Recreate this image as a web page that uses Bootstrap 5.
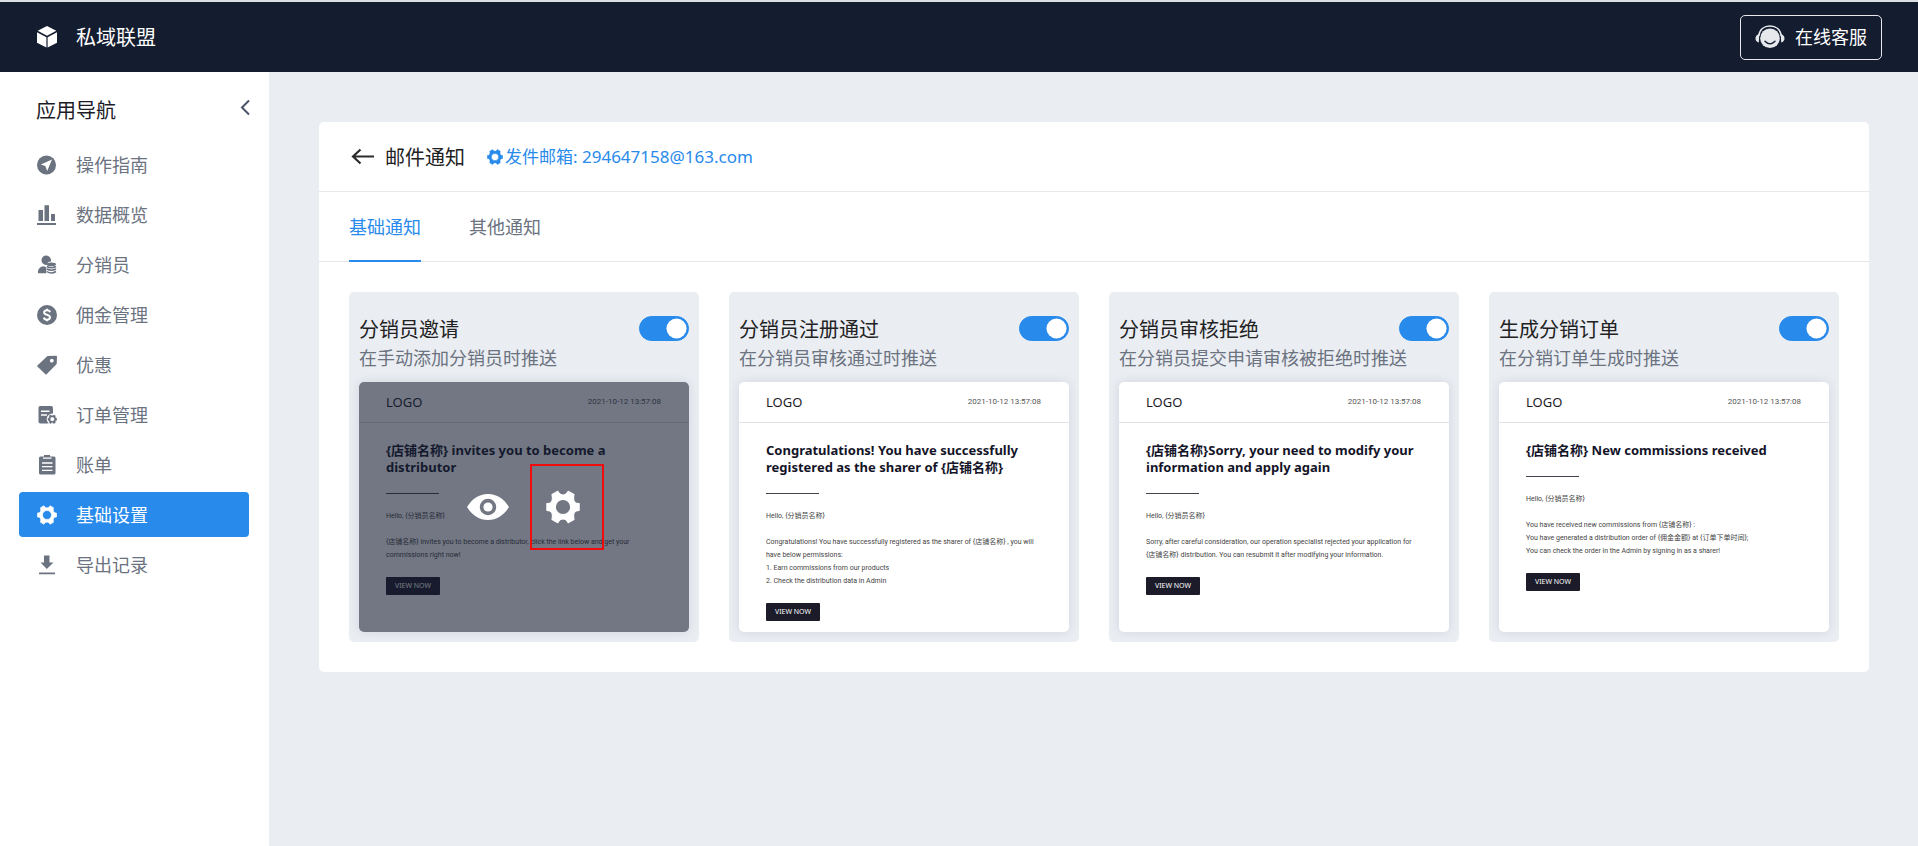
<!DOCTYPE html>
<html lang="zh-CN">
<head>
<meta charset="utf-8">
<meta name="viewport" content="width=device-width, initial-scale=1">
<title>邮件通知 - 私域联盟</title>
<link href="https://cdn.jsdelivr.net/npm/bootstrap@5.3.0/dist/css/bootstrap.min.css" rel="stylesheet">
<style>
:root { --navy: #141c30; --accent: #288aeb; --canvas: #eaedf2; --slate: #6b7280; }
body { font-family: "Noto Sans", "Noto Sans CJK SC", sans-serif; font-size: 18px; line-height: 26px; background: var(--canvas); color: #222; }
a { text-decoration: none; }
.icon { display: block; flex: none; fill: currentColor; }
.topbar { background: var(--navy); height: 72px; border-top: 2px solid #dcdfe4; padding: 0 36px 0 37px; }
.brand-link { gap: 19px; }
.brand-name, .page-title, .side-title { font-size: 20px; line-height: 30px; font-weight: 400; margin: 0; padding-top: 2px; }
.service-btn { height: 45px; padding: 0 14px; gap: 10px; border: 1px solid #e6e8eb; border-radius: 5px; color: #fff; background: none; font-size: 18px; }
.workspace { min-height: calc(100vh - 72px); }
.sidebar { width: 269px; flex: none; background: #fff; padding: 22px 19px 20px 19px; }
.side-head { height: 48px; padding: 0 0 0 17px; }
.side-title { color: #1c1c28; }
.side-nav { gap: 5px; margin-right: 1px; }
.side-nav .nav-link { height: 45px; padding: 0 18px; gap: 19px; border-radius: 4px; color: var(--slate); }
.side-nav .nav-link.active { background: var(--accent); color: #fff; }
.plain-btn { border: 0; background: none; padding: 0; color: inherit; }
.main-area { padding: 50px 49px 50px 50px; min-width: 0; }
.panel { background: #fff; border-radius: 5px; }
.panel-head { height: 70px; padding: 0 30px; border-bottom: 1px solid #e8eaed; }
.back-link { color: #2c2c2c; padding-left: 2px; margin-right: 10px; }
.sender { color: var(--accent); font-size: 17px; gap: 2px; margin-left: 22px; }
.tabs { height: 70px; padding: 0 30px; gap: 48px; border-bottom: 1px solid #e4e7ea; }
.tabs button { color: var(--slate); height: 70px; padding-top: 2px; border-bottom: 2px solid transparent; }
.tabs button.active { color: var(--accent); border-color: var(--accent); }
.panel-body { padding: 30px; }
.notice-grid { --bs-gutter-x: 30px; --bs-gutter-y: 30px; }
.notice { background: var(--canvas); border-radius: 5px; padding: 24px 10px 10px; }
.notice-title { font-size: 20px; line-height: 28px; }
.notice-desc { color: var(--slate); margin: 0 0 10px; line-height: 28px; white-space: nowrap; }
.form-switch .form-check-input.toggle { width: 50px; height: 25px; margin: 0; box-shadow: none; }
.toggle:checked { background-color: var(--accent); border-color: var(--accent);
  background-image: url("data:image/svg+xml,%3csvg xmlns='http://www.w3.org/2000/svg' viewBox='-4 -4 8 8'%3e%3ccircle r='3.5' fill='%23fff'/%3e%3c/svg%3e") !important; }
.preview { position: relative; height: 250px; background: #fff; border-radius: 5px; box-shadow: 0 0 12px rgba(20,28,48,.1); overflow: hidden; }
.mail-top { height: 41px; padding: 0 28px 0 27px; border-bottom: 1px solid #dfe1e4; }
.mail-logo { font-size: 13px; line-height: 18px; color: #1c1c28; }
.mail-date { font-family: Roboto, sans-serif; font-size: 8px; color: #555; }
.mail-body { padding: 19px 22px 0 27px; font-family: Roboto, "Noto Sans CJK SC", sans-serif; font-size: 7px; line-height: 13px; color: #444; }
.mail-body p { margin: 0 0 13px; white-space: nowrap; }
.mail-title { font-family: "Noto Sans", "Noto Sans CJK SC", sans-serif; font-size: 13px; line-height: 17px; font-weight: 700; color: #141428; margin: 0; white-space: nowrap; }
.mail-rule { width: 53px; height: 1px; background: #44444f; margin: 17px 0 16px; }
.mail-btn { background: #1c1b29; color: #fff; border: 0; border-radius: 1px; width: 54px; height: 18px; padding: 0; font-family: "Noto Sans", sans-serif; font-size: 7px; line-height: 18px; margin-top: 15px; display: block; }
.preview-tools { position: absolute; inset: 0; padding: 0 2px 1px 0; background: rgba(20,28,48,.6); color: #fff; gap: 37px; }
.focus-frame { position: absolute; inset: -26px -24px -26px -16px; border: 2px solid #f00c0c; }
</style>
</head>
<body>
<svg width="0" height="0" class="position-absolute" aria-hidden="true">
  <symbol id="gear" viewBox="-12.2 -12.2 24.4 24.4"><path fill-rule="evenodd" stroke="currentColor" stroke-width=".8" stroke-linejoin="round" d="M11.6-2.4 11.6 2.4Q9.200 2.300 8.200 3.800 7.200 5.400 7.900 8.900L3.700 11.300Q2.400 8.600 0 8.600-2.400 8.600-3.700 11.300L-7.900 8.900Q-7.200 5.400-8.200 3.800-9.200 2.300-11.600 2.400L-11.600-2.400Q-9.200-2.300-8.200-3.800-7.200-5.400-7.900-8.900L-3.700-11.300Q-2.400-8.600 0-8.600 2.400-8.600 3.700-11.300L7.900-8.900Q7.200-5.400 8.200-3.800 9.200-2.300 11.600-2.400ZM0-5.500A5.500 5.500 0 1 0 0 5.500 5.500 5.500 0 1 0 0-5.500Z"/></symbol>
</svg>

<header class="topbar d-flex align-items-center justify-content-between">
  <a href="#" class="brand-link d-flex align-items-center text-white">
    <svg class="icon" width="20" height="22" viewBox="0 0 20 22"><path d="M10 0 19.3 4.8 10 9.8.7 4.8ZM0 6.2 9.4 11.2V21.6L0 16.8ZM20 6.2 10.6 11.2V21.6L20 16.8Z"/></svg>
    <span class="brand-name">私域联盟</span>
  </a>
  <button type="button" class="service-btn d-flex align-items-center">
    <svg class="icon" width="30" height="24" viewBox="0 0 30 24"><path d="M3.800 11C4.500 4.500 9 1 15 1S25.500 4.500 26.200 11" fill="none" stroke="#e6e8eb" stroke-width="1.700"/><path d="M4.300 9C1.500 9.800.5 11.500.5 13.500S1.800 17 3.800 17.400ZM25.700 9C28.500 9.800 29.500 11.500 29.500 13.500S28.200 17 26.200 17.400Z" fill="#e6e8eb"/><circle cx="15" cy="13.300" r="9.800" fill="#e6e8eb"/><path d="M10 16.300Q15 21.500 20 16.300" fill="none" stroke="#141c30" stroke-width="1.400" stroke-linecap="round"/></svg>
    <span>在线客服</span>
  </button>
</header>

<div class="workspace d-flex align-items-stretch">
  <aside class="sidebar">
    <div class="side-head d-flex align-items-start justify-content-between">
      <h2 class="side-title">应用导航</h2>
      <button type="button" class="plain-btn mt-1" aria-label="收起"><svg class="icon" width="10" height="18" viewBox="0 0 10 18"><path d="M9 2.500 2 9.500 9 16.500" fill="none" stroke="#4b5368" stroke-width="2"/></svg></button>
    </div>
    <nav class="side-nav nav flex-column">
      <a href="#" class="nav-link d-flex align-items-center"><svg class="icon" width="20" height="20" viewBox="0 0 20 20"><circle cx="9.500" cy="10" r="9.500"/><path fill="#fff" d="M15 4.500 3.800 9.600 8.300 11 10.200 16Z"/></svg>操作指南</a>
      <a href="#" class="nav-link d-flex align-items-center"><svg class="icon" width="20" height="20" viewBox="0 0 20 20"><path d="M1.500 5H6V16H1.500ZM7.500.3H12V16H7.500ZM14 9H18V16H14ZM0 18H19V20H0Z"/></svg>数据概览</a>
      <a href="#" class="nav-link d-flex align-items-center"><svg class="icon" width="20" height="20" viewBox="0 0 20 20"><path d="M9.300.5A5 5 0 0 1 14 6.500C11.500 6.700 9.800 8 9.700 10 6.800 9.800 4.500 8 4.500 5.200A4.800 4.800 0 0 1 9.300.5ZM1 18C.7 14 3 11.300 7 11.200L9.300 12.500V18.300H1.500Z"/><ellipse cx="14.300" cy="9.300" rx="4.700" ry="1.900"/><path d="M9.800 11.500Q14.300 14 19 11.500M9.800 14Q14.300 16.500 19 14M9.800 16.500Q14.300 19.500 19 16.500" fill="none" stroke="currentColor" stroke-width="1.500"/></svg>分销员</a>
      <a href="#" class="nav-link d-flex align-items-center"><svg class="icon" width="20" height="20" viewBox="0 0 20 20"><circle cx="10" cy="10" r="10"/><path d="M13 7.200C12.700 5.800 11.600 5.300 10 5.300 8.200 5.300 7.100 6.100 7.100 7.400 7.100 10.300 13 9.200 13 12.300 13 13.800 11.800 14.700 10 14.700 8.200 14.700 7.100 13.900 6.900 12.500M10 3.800V5.300M10 14.700V16.200" fill="none" stroke="#fff" stroke-width="2"/></svg>佣金管理</a>
      <a href="#" class="nav-link d-flex align-items-center"><svg class="icon" width="20" height="20" viewBox="0 0 20 20"><path fill-rule="evenodd" d="M10.500 1 19 .8Q20 .8 20 1.800L19.700 9 9.600 19.300Q9 19.800 8.400 19.300L.4 11.500Q-.1 11 .4 10.400ZM14.800 3.800A1.900 1.900 0 1 0 14.800 7.600 1.900 1.900 0 1 0 14.800 3.800Z"/></svg>优惠</a>
      <a href="#" class="nav-link d-flex align-items-center"><svg class="icon" width="20" height="20" viewBox="0 0 20 20"><rect x="1.500" y="1" width="14.500" height="17.500" rx="1.800"/><path d="M4 6.300H12.500M4 10H10" stroke="#fff" stroke-width="1.600"/><circle cx="15.300" cy="14.200" r="5.600" fill="#fff"/><use href="#gear" x="10.500" y="9.400" width="9.600" height="9.600"/></svg>订单管理</a>
      <a href="#" class="nav-link d-flex align-items-center"><svg class="icon" width="20" height="20" viewBox="0 0 20 20"><path d="M7 0H13V1.500H17Q18.500 1.500 18.500 3V18Q18.500 19.500 17 19.500H3.500Q2 19.500 2 18V3Q2 1.500 3.500 1.500H7Z"/><path d="M6 3.200H14.500M5 8H15.500M5 11.700H15.500M5 15.400H15.500" stroke="#fff" stroke-width="1.300"/></svg>账单</a>
      <a href="#" class="nav-link active d-flex align-items-center" aria-current="page"><svg class="icon" width="20" height="20"><use href="#gear"/></svg>基础设置</a>
      <a href="#" class="nav-link d-flex align-items-center"><svg class="icon" width="20" height="20" viewBox="0 0 20 20"><path d="M7 .5H12.500V7.500H16.500L9.800 14 3.500 7.500H7ZM2 17.500H18V19.300H2Z"/></svg>导出记录</a>
    </nav>
  </aside>

  <main class="main-area flex-grow-1">
    <section class="panel">
      <div class="panel-head d-flex align-items-center">
        <a href="#" class="back-link" aria-label="返回"><svg class="icon" width="24" height="18" viewBox="0 0 24 18"><path d="M23 8.500H2M9.500 1.500 2 8.500 9.500 15.500" fill="none" stroke="currentColor" stroke-width="2.200"/></svg></a>
        <h1 class="page-title">邮件通知</h1>
        <a href="#" class="sender d-flex align-items-center"><svg class="icon" width="16" height="16"><use href="#gear"/></svg>发件邮箱: 294647158@163.com</a>
      </div>
      <div class="tabs d-flex" role="tablist">
        <button type="button" class="plain-btn active" role="tab" aria-selected="true">基础通知</button>
        <button type="button" class="plain-btn" role="tab" aria-selected="false">其他通知</button>
      </div>
      <div class="panel-body">
        <div class="row row-cols-1 row-cols-md-2 row-cols-xl-4 notice-grid">
          <div class="col">
            <article class="notice">
              <div class="form-check form-switch d-flex align-items-start justify-content-between p-0 m-0">
                <label class="notice-title" for="sw1">分销员邀请</label>
                <input class="form-check-input toggle" type="checkbox" role="switch" id="sw1" checked>
              </div>
              <p class="notice-desc">在手动添加分销员时推送</p>
              <div class="preview">
                <div class="mail-top d-flex align-items-center justify-content-between"><span class="mail-logo">LOGO</span><time class="mail-date">2021-10-12 13:57:08</time></div>
                <div class="mail-body">
                  <h3 class="mail-title">{店铺名称} invites you to become a<br>distributor</h3>
                  <div class="mail-rule"></div>
                  <p>Hello, {分销员名称}</p>
                  <p>{店铺名称} invites you to become a distributor, click the link below and get your<br>commissions right now!</p>
                  <button type="button" class="mail-btn">VIEW NOW</button>
                </div>
                <div class="preview-tools d-flex align-items-center justify-content-center">
                  <button type="button" class="plain-btn" aria-label="预览"><svg class="icon" width="42" height="26" viewBox="0 0 42 26"><path fill-rule="evenodd" d="M0 13C5 5 12 0 21 0S37 5 42 13C37 21 30 26 21 26S5 21 0 13ZM21 4.800A8.200 8.200 0 1 0 21 21.200 8.200 8.200 0 1 0 21 4.800Z"/><circle cx="21" cy="13" r="4.600"/></svg></button>
                  <button type="button" class="plain-btn position-relative" aria-label="设置"><svg class="icon" width="34" height="34"><use href="#gear"/></svg><span class="focus-frame"></span></button>
                </div>
              </div>
            </article>
          </div>
          <div class="col">
            <article class="notice">
              <div class="form-check form-switch d-flex align-items-start justify-content-between p-0 m-0">
                <label class="notice-title" for="sw2">分销员注册通过</label>
                <input class="form-check-input toggle" type="checkbox" role="switch" id="sw2" checked>
              </div>
              <p class="notice-desc">在分销员审核通过时推送</p>
              <div class="preview">
                <div class="mail-top d-flex align-items-center justify-content-between"><span class="mail-logo">LOGO</span><time class="mail-date">2021-10-12 13:57:08</time></div>
                <div class="mail-body">
                  <h3 class="mail-title">Congratulations! You have successfully<br>registered as the sharer of {店铺名称}</h3>
                  <div class="mail-rule"></div>
                  <p>Hello, {分销员名称}</p>
                  <p>Congratulations! You have successfully registered as the sharer of {店铺名称} , you will<br>have below permissions:<br>1. Earn commissions from our products<br>2. Check the distribution data in Admin</p>
                  <button type="button" class="mail-btn">VIEW NOW</button>
                </div>
              </div>
            </article>
          </div>
          <div class="col">
            <article class="notice">
              <div class="form-check form-switch d-flex align-items-start justify-content-between p-0 m-0">
                <label class="notice-title" for="sw3">分销员审核拒绝</label>
                <input class="form-check-input toggle" type="checkbox" role="switch" id="sw3" checked>
              </div>
              <p class="notice-desc">在分销员提交申请审核被拒绝时推送</p>
              <div class="preview">
                <div class="mail-top d-flex align-items-center justify-content-between"><span class="mail-logo">LOGO</span><time class="mail-date">2021-10-12 13:57:08</time></div>
                <div class="mail-body">
                  <h3 class="mail-title">{店铺名称}Sorry, your need to modify your<br>information and apply again</h3>
                  <div class="mail-rule"></div>
                  <p>Hello, {分销员名称}</p>
                  <p>Sorry, after careful consideration, our operation specialist rejected your application for<br>{店铺名称} distribution. You can resubmit it after modifying your information.</p>
                  <button type="button" class="mail-btn">VIEW NOW</button>
                </div>
              </div>
            </article>
          </div>
          <div class="col">
            <article class="notice">
              <div class="form-check form-switch d-flex align-items-start justify-content-between p-0 m-0">
                <label class="notice-title" for="sw4">生成分销订单</label>
                <input class="form-check-input toggle" type="checkbox" role="switch" id="sw4" checked>
              </div>
              <p class="notice-desc">在分销订单生成时推送</p>
              <div class="preview">
                <div class="mail-top d-flex align-items-center justify-content-between"><span class="mail-logo">LOGO</span><time class="mail-date">2021-10-12 13:57:08</time></div>
                <div class="mail-body">
                  <h3 class="mail-title">{店铺名称} New commissions received</h3>
                  <div class="mail-rule"></div>
                  <p>Hello, {分销员名称}</p>
                  <p>You have received new commissions from {店铺名称} :<br>You have generated a distribution order of {佣金金额} at {订单下单时间};<br>You can check the order in the Admin by signing in as a sharer!</p>
                  <button type="button" class="mail-btn">VIEW NOW</button>
                </div>
              </div>
            </article>
          </div>
        </div>
      </div>
    </section>
  </main>
</div>
<script src="https://cdn.jsdelivr.net/npm/bootstrap@5.3.0/dist/js/bootstrap.bundle.min.js"></script>
</body>
</html>
